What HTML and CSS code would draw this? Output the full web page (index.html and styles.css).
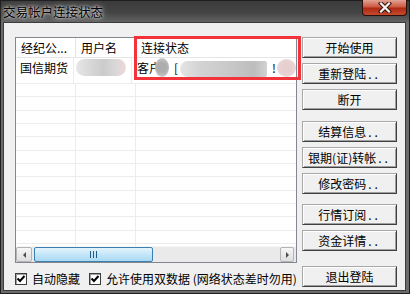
FILE: index.html
```html
<!DOCTYPE html>
<html lang="zh-CN">
<head>
  <meta charset="UTF-8" />
  <title>交易帐户连接状态</title>
  <link rel="stylesheet" href="styles.css">
</head>
<body>
  <div class="window">
    <div class="titlebar">
      <span class="title">交易帐户连接状态</span>
      <div class="close">
        <svg width="14" height="11" viewBox="0 0 14 11">
          <path d="M3 1.5 L11 9.5 M11 1.5 L3 9.5" stroke="#3a120a" stroke-width="4.2" stroke-linecap="square"/>
          <path d="M3 1.5 L11 9.5 M11 1.5 L3 9.5" stroke="#f4f4f4" stroke-width="2.2" stroke-linecap="square"/>
        </svg>
      </div>
    </div>

    <div class="client">
      <div class="main">
        <div class="left">
          <div class="list">
            <div class="list-head">
              <div class="col c1">经纪公...</div>
              <div class="col c2">用户名</div>
              <div class="col c3">连接状态</div>
            </div>
            <div class="list-body">
              <div class="row">
                <div class="cell c1">国信期货</div>
                <div class="cell c2"><span class="smudge smudge-name"></span></div>
                <div class="cell c3">
                  客户<span class="smudge dot"></span><span class="bracket">[</span><span class="smudge smudge-id"></span><span class="bang">!</span><span class="smudge dot pink"></span>
                </div>
              </div>
            </div>
            <div class="hscroll">
              <div class="arrow"><span class="tri tri-left"></span></div>
              <div class="thumb"><span class="grip"></span></div>
              <div class="track"></div>
              <div class="arrow arrow-right"><span class="tri tri-right"></span></div>
            </div>
            <div class="highlight"></div>
          </div>

          <div class="checks">
            <label class="check">
              <span class="box"><svg width="10" height="10" viewBox="0 0 10 10"><path d="M1.5 4.5 L4 7 L8.5 2" fill="none" stroke="#000" stroke-width="2"/></svg></span>
              自动隐藏
            </label>
            <label class="check second">
              <span class="box"><svg width="10" height="10" viewBox="0 0 10 10"><path d="M1.5 4.5 L4 7 L8.5 2" fill="none" stroke="#000" stroke-width="2"/></svg></span>
              允许使用双数据 (网络状态差时勿用)
            </label>
          </div>
        </div>

        <div class="buttons">
          <button>开始使用</button>
          <button>重新登陆<span class="dots">..</span></button>
          <button>断开</button>
          <button class="sep-a">结算信息<span class="dots">..</span></button>
          <button>银期(证)转帐<span class="dots">..</span></button>
          <button>修改密码<span class="dots">..</span></button>
          <button class="sep-b">行情订阅<span class="dots">..</span></button>
          <button>资金详情<span class="dots">..</span></button>
          <button class="sep-c">退出登陆</button>
        </div>
      </div>
    </div>
  </div>
</body>
</html>
```

FILE: styles.css
```css
body {
  margin: 0;
  font-family: "Noto Sans CJK SC", "Liberation Sans", sans-serif;
  font-size: 12px;
  color: #000;
}
.window {
  width: 410px;
  height: 294px;
  box-sizing: border-box;
  border: 1px solid #1e1e1e;
  background: #6b6b6b;
  display: flex;
  flex-direction: column;
}
.titlebar {
  height: 21px;
  flex: none;
  display: flex;
  align-items: flex-start;
  background: linear-gradient(to bottom, #3b3b3b, #444 55%, #626262);
}
.title {
  padding: 3px 0 0 2px;
  line-height: 16px;
  font-size: 12.5px;
  color: #000;
  text-shadow: 0 0 3px #fff, 0 0 7px rgba(255,255,255,0.8);
}
.close {
  margin-left: auto;
  margin-right: 2px;
  margin-top: -1px;
  width: 45px;
  height: 16px;
  box-sizing: border-box;
  border: 1px solid #2a100a;
  border-top: none;
  border-radius: 0 0 4px 4px;
  background: linear-gradient(to bottom, #e2a393, #cc5a43 45%, #ad2a12 55%, #c64a2e);
  display: flex;
  align-items: center;
  justify-content: center;
}
.client {
  flex: 1;
  margin: 0 3px 2px 2px;
  border: 1px solid #3c3c3c;
  background: #f0f0f0;
}
.main {
  display: flex;
  gap: 5px;
  padding: 14px 0 0 11px;
}
.left {
  width: 282px;
}
.list {
  position: relative;
  height: 226px;
  box-sizing: border-box;
  border: 1px solid #828790;
  background: #fff;
  display: flex;
  flex-direction: column;
}
.list-head {
  height: 19px;
  flex: none;
  display: flex;
  border-bottom: 1px solid #e5e5e5;
}
.col {
  box-sizing: border-box;
  line-height: 19px;
  padding-left: 5px;
  white-space: nowrap;
  border-right: 1px solid #e5e5e5;
}
.c1 { width: 60px; }
.c2 { width: 60px; }
.c3 { flex: 1; border-right: none; }
.list-body {
  flex: 1;
  background:
    linear-gradient(#ececec, #ececec) 59px 0 / 1px 100% no-repeat,
    linear-gradient(#ececec, #ececec) 119px 0 / 1px 100% no-repeat,
    repeating-linear-gradient(to bottom, #ececec 0 1px, transparent 1px 13.33px) 0 25px;
}
.row {
  height: 25px;
  display: flex;
  background: #fff;
  border-bottom: 1px solid #ececec;
}
.cell {
  box-sizing: border-box;
  display: flex;
  align-items: flex-start;
  line-height: 19px;
  padding-left: 4px;
  white-space: nowrap;
  border-right: 1px solid #ececec;
}
.cell.c3 {
  padding-left: 5px;
  border-right: none;
}
.smudge {
  display: inline-block;
  filter: blur(0.6px);
}
.smudge-name {
  width: 50px;
  height: 17px;
  margin: 1px 0 0 -2px;
  border-radius: 9px;
  background: linear-gradient(90deg, #e6e6e6, #d7d7d7 30%, #cbcbcb 55%, #d8d8d8 78%, #efd8d9);
}
.dot {
  width: 14px;
  height: 19px;
  margin: 0 0 0 -6px;
  border-radius: 50%;
  background: radial-gradient(circle, #adadad 40%, #c6c6c6 75%, #e2e2e2);
}
.dot.pink {
  width: 19px;
  height: 18px;
  margin: 1px 0 0 1px;
  background: radial-gradient(circle, #e7cfd0 40%, #ead8d8 75%, #f2e6e6);
}
.bracket {
  margin-left: 5px;
}
.smudge-id {
  width: 87px;
  height: 16px;
  margin: 3px 0 0 2px;
  border-radius: 8px 2px 2px 8px;
  background: linear-gradient(90deg, #e4e4e4, #d2d2d2 25%, #c9c9c9 55%, #bdbdbd 85%, #d2d2d2);
}
.bang {
  margin-left: 5px;
}
.hscroll {
  height: 15px;
  flex: none;
  display: flex;
  align-items: stretch;
  background: #eaeaea;
  border-top: 1px solid #f5f5f5;
}
.arrow {
  width: 16px;
  box-sizing: border-box;
  border: 1px solid #b4b4b4;
  border-radius: 2px;
  background: linear-gradient(to bottom, #f6f6f6, #dedede);
  display: flex;
  align-items: center;
  justify-content: center;
}
.arrow-right {
  width: 14px;
  margin-right: 2px;
}
.tri {
  width: 0;
  height: 0;
  border-top: 3px solid transparent;
  border-bottom: 3px solid transparent;
}
.tri-left { border-right: 3px solid #4d4d4d; }
.tri-right { border-left: 3px solid #4d4d4d; }
.thumb {
  width: 119px;
  margin-left: 2px;
  box-sizing: border-box;
  border: 1px solid #3c7fb1;
  border-radius: 2px;
  background: linear-gradient(to bottom, #e4f4fc, #c4e6f8 50%, #a9d9f2);
  display: flex;
  align-items: center;
  justify-content: center;
}
.grip {
  width: 7px;
  height: 7px;
  background: repeating-linear-gradient(90deg, #1f5a85 0 1px, transparent 1px 3px);
}
.track {
  flex: 1;
}
.highlight {
  position: absolute;
  left: 118px;
  top: -2px;
  width: 167px;
  height: 44px;
  box-sizing: border-box;
  border: 3px solid #f2343a;
}
.checks {
  display: flex;
  align-items: center;
  height: 17px;
  margin-top: 7px;
}
.check {
  display: flex;
  align-items: center;
  gap: 5px;
  white-space: nowrap;
}
.check.second {
  margin-left: 9px;
}
.box {
  width: 12px;
  height: 12px;
  box-sizing: border-box;
  border: 1px solid #3c3c3c;
  background: #fff;
  box-shadow: inset 1px 1px #a0a0a0;
  display: flex;
  align-items: center;
  justify-content: center;
}
.buttons {
  width: 95px;
  display: flex;
  flex-direction: column;
  gap: 5px;
}
button {
  height: 21px;
  box-sizing: border-box;
  padding: 0;
  font-family: "Noto Sans CJK SC", "Liberation Sans", sans-serif;
  font-size: 12px;
  line-height: 18px;
  color: #000;
  background: #f0f0f0;
  border: 1px solid;
  border-color: #a8a8a8 #404040 #404040 #a8a8a8;
  box-shadow: inset 1px 1px #fff, inset -1px -1px #a0a0a0;
}
.dots {
  letter-spacing: 3px;
  margin-left: 2px;
}
.sep-a { margin-top: 6px; }
.sep-b { margin-top: 5px; }
.sep-c { margin-top: 10px; }
```
